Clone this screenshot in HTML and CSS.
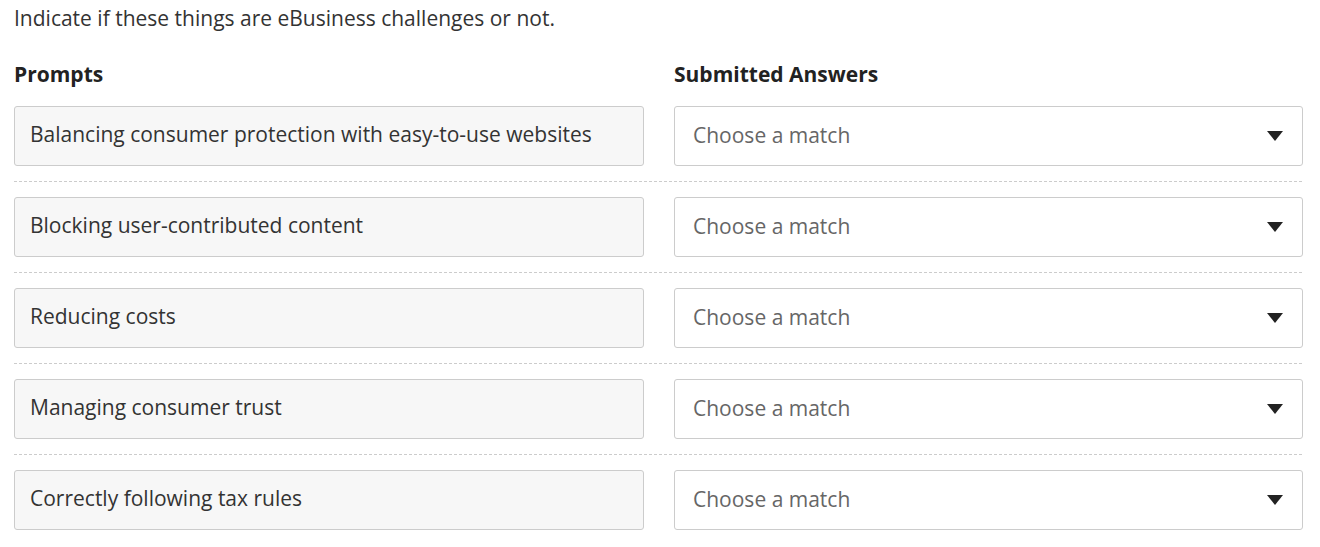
FILE: index.html
```html
<!DOCTYPE html>
<html lang="en">
<head>
  <meta charset="UTF-8" />
  <title>eBusiness challenges</title>
  <link rel="stylesheet" href="styles.css">
</head>
<body>

  <div class="question">
    <p class="instructions">Indicate if these things are eBusiness challenges or not.</p>

    <div class="headings">
      <h3>Prompts</h3>
      <h3>Submitted Answers</h3>
    </div>

    <div class="row">
      <div class="prompt">Balancing consumer protection with easy-to-use websites</div>
      <div class="answer"><span class="placeholder">Choose a match</span><span class="caret"></span></div>
    </div>
    <div class="row">
      <div class="prompt">Blocking user-contributed content</div>
      <div class="answer"><span class="placeholder">Choose a match</span><span class="caret"></span></div>
    </div>
    <div class="row">
      <div class="prompt">Reducing costs</div>
      <div class="answer"><span class="placeholder">Choose a match</span><span class="caret"></span></div>
    </div>
    <div class="row">
      <div class="prompt">Managing consumer trust</div>
      <div class="answer"><span class="placeholder">Choose a match</span><span class="caret"></span></div>
    </div>
    <div class="row">
      <div class="prompt">Correctly following tax rules</div>
      <div class="answer"><span class="placeholder">Choose a match</span><span class="caret"></span></div>
    </div>
  </div>

</body>
</html>
```

FILE: styles.css
```css
body {
  margin: 0;
  font-family: 'Open Sans', sans-serif;
  font-size: 21px;
  line-height: 30px;
  color: #333;
  background: #fff;
}
.question {
  width: 1288px;
  margin: 3px 0 0 14px;
}
.instructions {
  margin: 0 0 26px;
}
.headings {
  display: grid;
  grid-template-columns: 630px 629px;
  column-gap: 30px;
  margin-bottom: 17px;
}
.headings h3 {
  margin: 0;
  font-size: 21px;
  font-weight: bold;
  color: #222;
}
.row {
  display: grid;
  grid-template-columns: 630px 629px;
  column-gap: 30px;
  padding-bottom: 15px;
  margin-bottom: 15px;
  border-bottom: 1px dashed #ccc;
}
.row:last-child {
  border-bottom: none;
}
.prompt, .answer {
  box-sizing: border-box;
  height: 60px;
  border: 1px solid #ccc;
  border-radius: 3px;
  display: flex;
  align-items: center;
}
.prompt {
  background: #f7f7f7;
  padding: 0 15px 4px;
}
.answer {
  background: #fff;
  color: #666;
  padding: 0 19px 0 18px;
  justify-content: space-between;
}
.placeholder {
  margin-bottom: 2px;
}
.caret {
  width: 0;
  height: 0;
  border-left: 8px solid transparent;
  border-right: 8px solid transparent;
  border-top: 10px solid #222;
}
```
